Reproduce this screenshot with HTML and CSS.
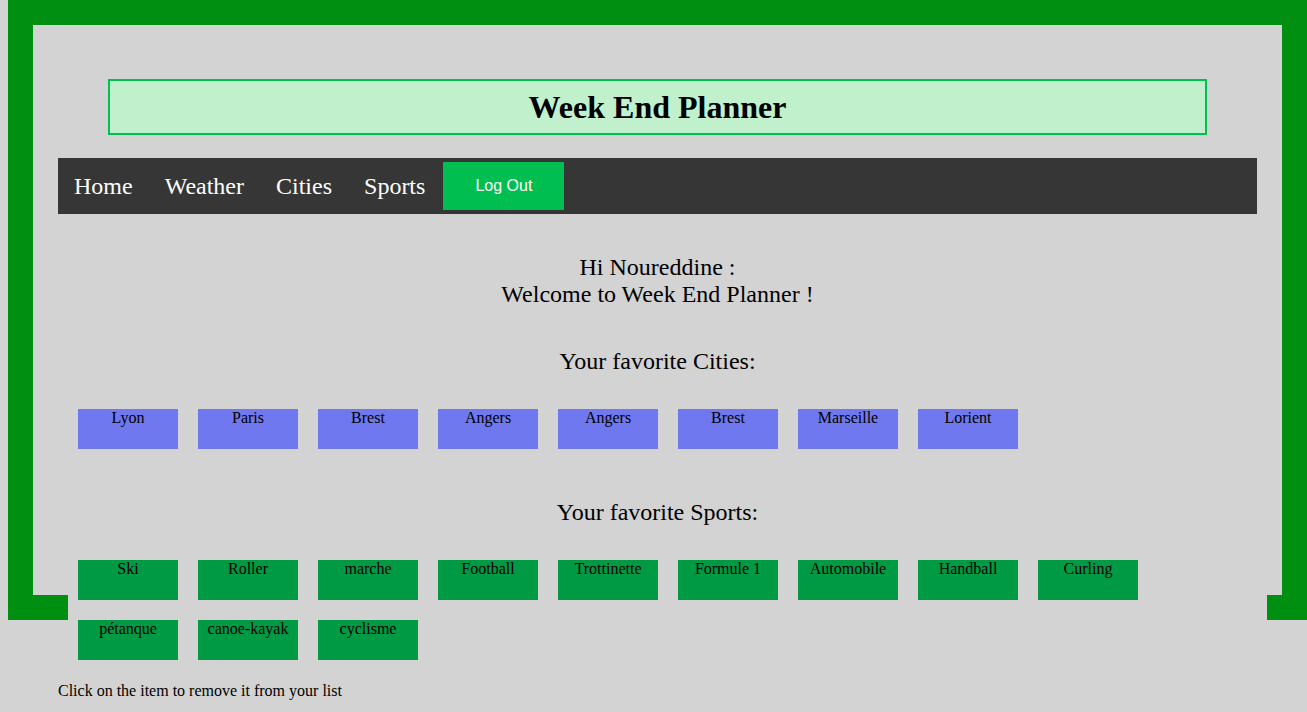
FILE: index.html
```html
<!DOCTYPE html>
<html lang="en">
<head>
<meta charset="utf-8">
<title>Week End Planner</title>
<link rel="stylesheet" href="styles.css">
</head>
<body>
<div class="frame">
  <header class="title">
    <h1>Week End Planner</h1>
  </header>
  <nav class="topnav">
    <a href="#" class="navlink">Home</a>
    <a href="#" class="navlink">Weather</a>
    <a href="#" class="navlink">Cities</a>
    <a href="#" class="navlink">Sports</a>
    <button class="logout">Log Out</button>
  </nav>
  <section class="greeting">
    <p>Hi Noureddine :</p>
    <p>Welcome to Week End Planner !</p>
  </section>
  <h2 class="section-title cities-title">Your favorite Cities:</h2>
  <ul class="list cities">
    <li class="item city">Lyon</li>
    <li class="item city">Paris</li>
    <li class="item city">Brest</li>
    <li class="item city">Angers</li>
    <li class="item city">Angers</li>
    <li class="item city">Brest</li>
    <li class="item city">Marseille</li>
    <li class="item city">Lorient</li>
  </ul>
  <h2 class="section-title sports-title">Your favorite Sports:</h2>
  <ul class="list sports">
    <li class="item sport">Ski</li>
    <li class="item sport">Roller</li>
    <li class="item sport">marche</li>
    <li class="item sport">Football</li>
    <li class="item sport">Trottinette</li>
    <li class="item sport">Formule 1</li>
    <li class="item sport">Automobile</li>
    <li class="item sport">Handball</li>
    <li class="item sport">Curling</li>
    <li class="item sport">pétanque</li>
    <li class="item sport">canoe-kayak</li>
    <li class="item sport">cyclisme</li>
  </ul>
  <p class="hint">Click on the item to remove it from your list</p>
</div>
</body>
</html>
```

FILE: styles.css
```css
html, body {
  margin: 0;
  padding: 0;
}

html {
  background: #d3d3d3;
}

body {
  background: #d3d3d3;
  font-family: "Liberation Serif", "Times New Roman", serif;
  color: #000;
  font-size: 16px;
  min-height: 712px;
}

.frame {
  margin-left: 8px;
  width: 1199px;
  height: 520px;
  padding: 25px;
  border: 25px solid #008f11;
}

.title {
  margin: 29px 50px 0;
  border: 2px solid #00c050;
  background: #c0f0cc;
}

.title h1 {
  margin: 0;
  padding: 8px 0;
  line-height: 36px;
  font-size: 32px;
  font-weight: bold;
  text-align: center;
}

.topnav {
  margin-top: 23px;
  height: 56px;
  background: #363636;
  display: flex;
  align-items: center;
}

.navlink {
  color: #fff;
  text-decoration: none;
  font-size: 24px;
  padding: 0 16px;
}

.logout {
  margin-left: 2px;
  height: 48px;
  padding: 0 32px;
  border: none;
  background: #00be50;
  color: #fff;
  font-family: "Liberation Sans", Arial, sans-serif;
  font-size: 16px;
}

.greeting {
  margin-top: 40px;
  text-align: center;
  font-size: 24px;
}

.greeting p {
  margin: 0;
}

.section-title {
  margin: 0;
  font-weight: normal;
  font-size: 24px;
  text-align: center;
}

.cities-title {
  margin-top: 40px;
}

.sports-title {
  margin-top: 40px;
}

.list {
  list-style: none;
  margin: 24px 0 0 10px;
  padding: 0;
  width: 1199px;
  display: flex;
  flex-wrap: wrap;
  background: #d3d3d3;
}

.sports {
  margin-top: 24.4px;
}

.item {
  width: 100px;
  height: 40px;
  margin: 10px;
  text-align: center;
  font-size: 16px;
  cursor: pointer;
}

.city {
  background: #6f78ee;
}

.sport {
  background: #009a44;
}

.hint {
  margin: 12px 0 0;
  font-size: 16px;
}
```
